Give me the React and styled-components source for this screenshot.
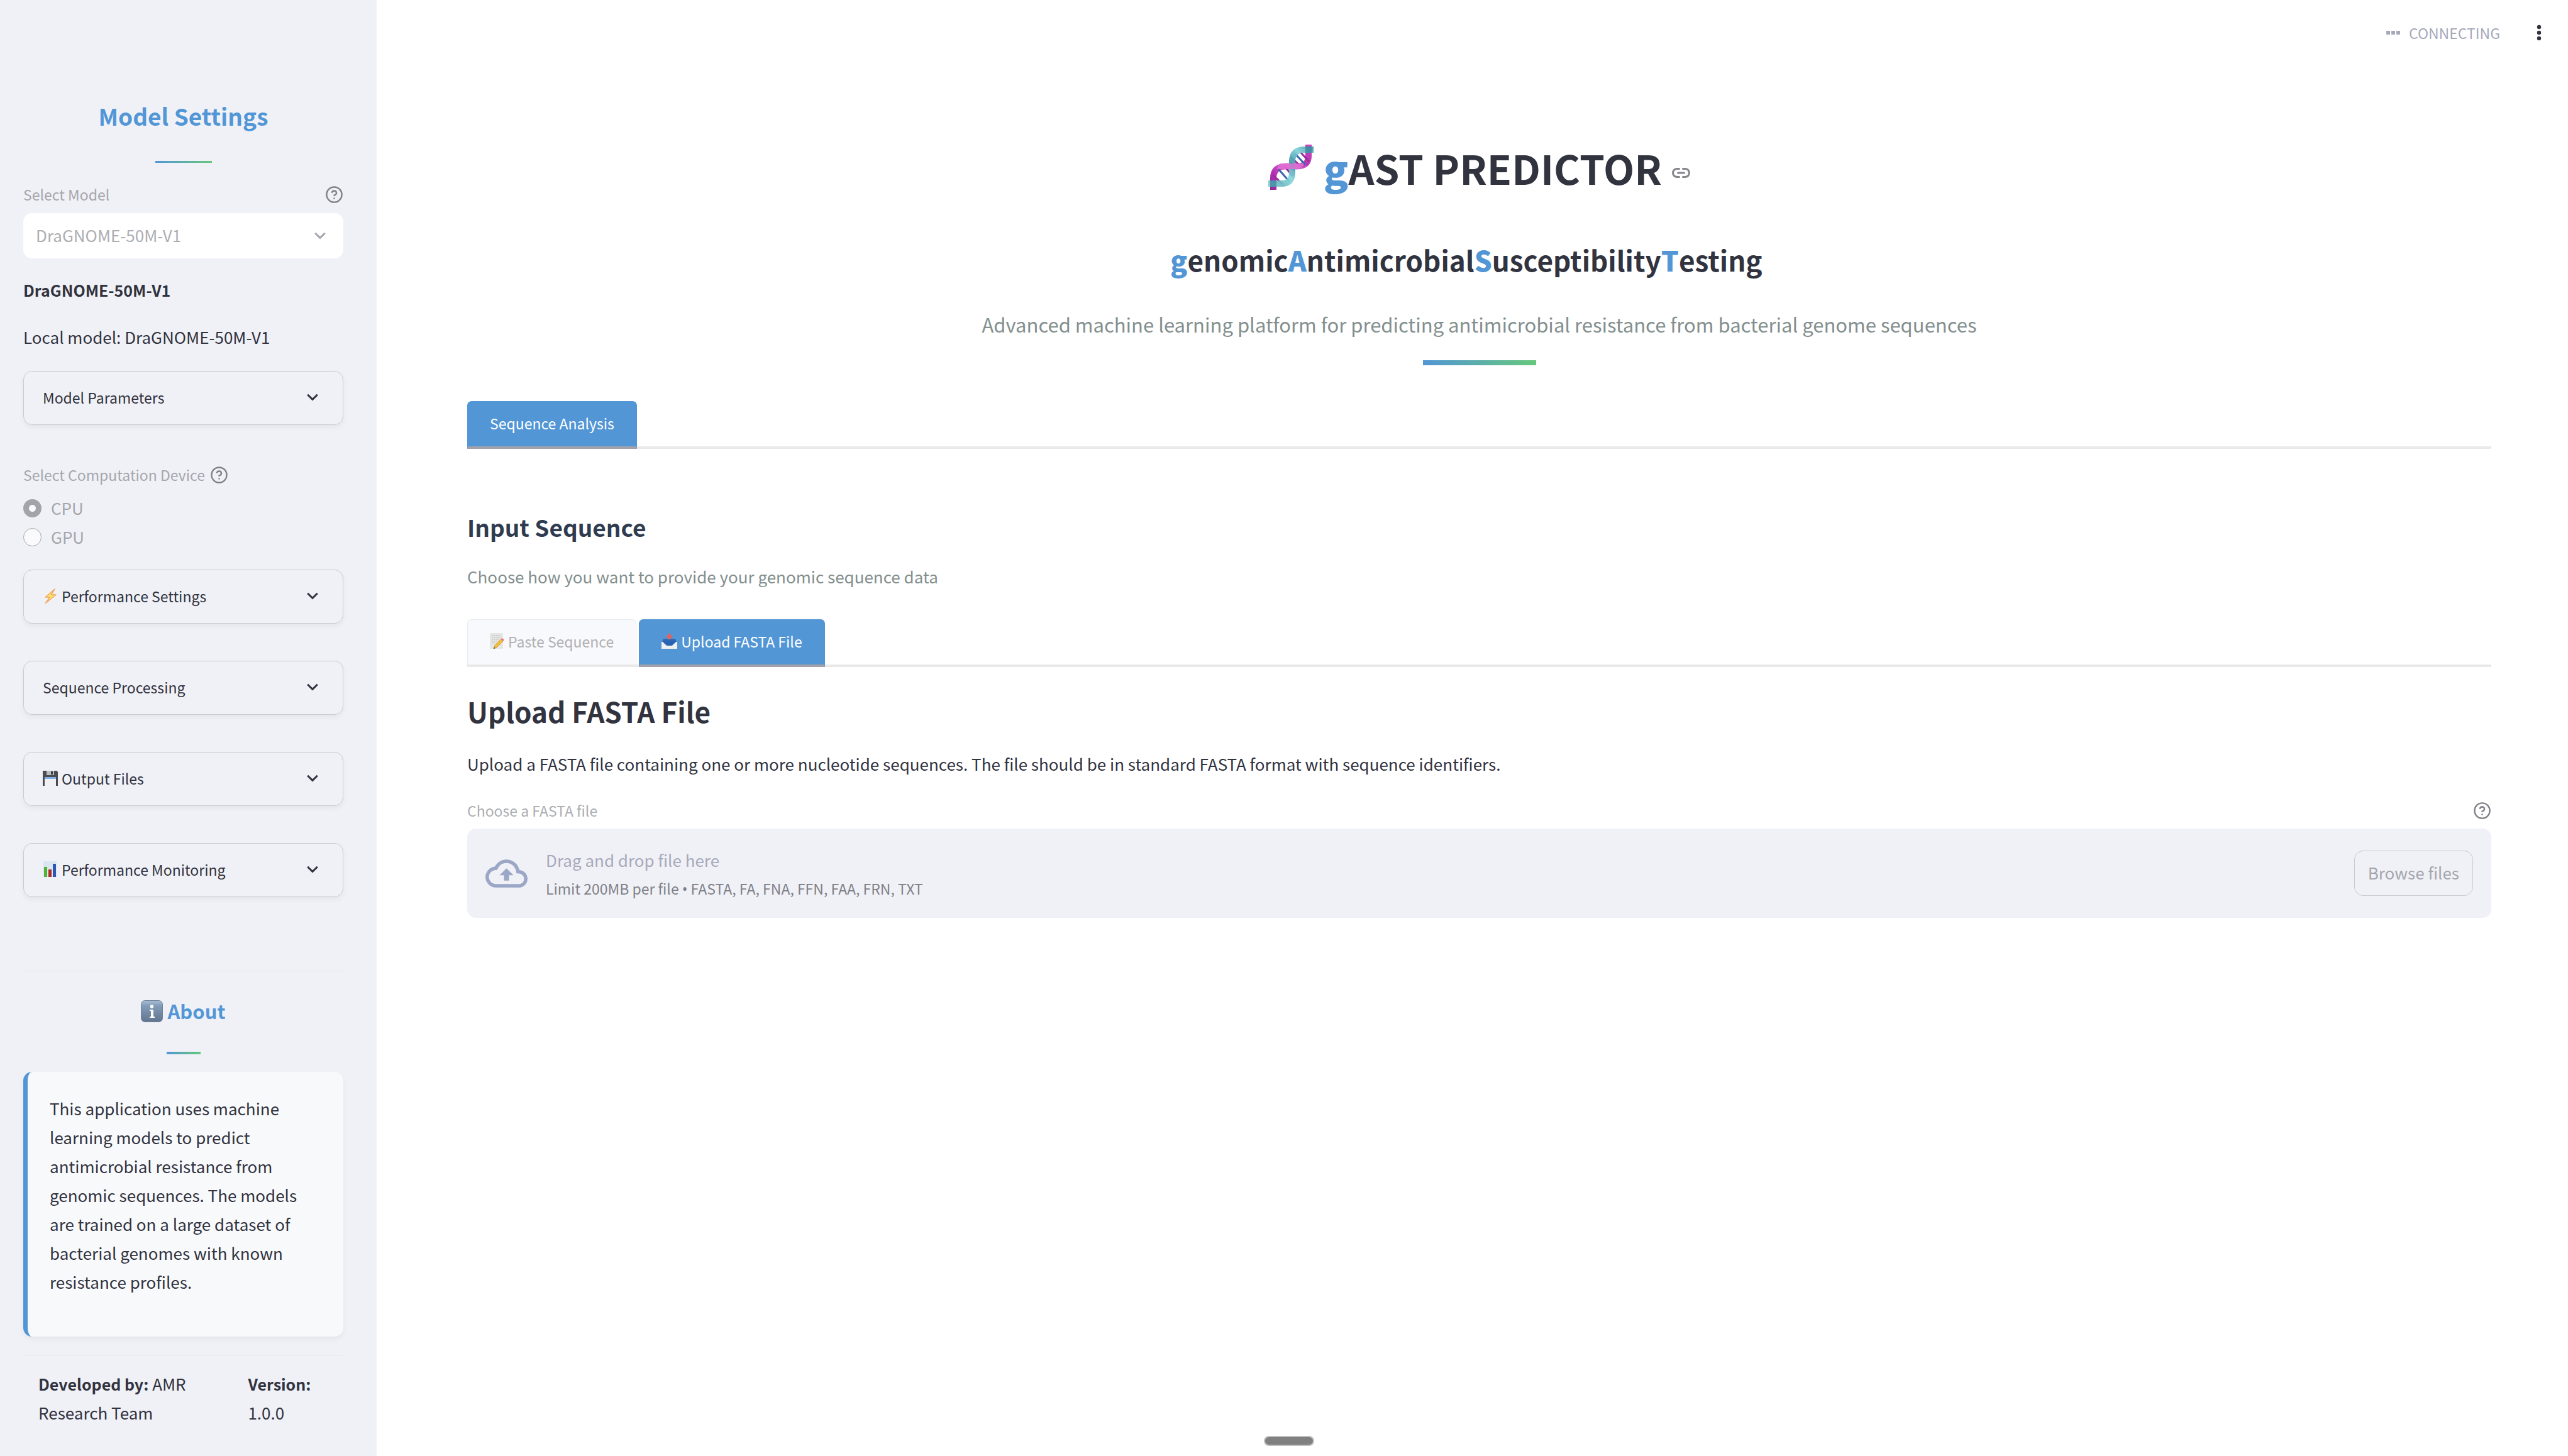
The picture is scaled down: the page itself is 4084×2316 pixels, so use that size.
import React from "react";
import styled, { createGlobalStyle } from "styled-components";

const blue = "#5296d6";
const ink = "#31333f";
const panel = "#f0f1f6";
const faded = "#a5a6ad";
const gradient = "linear-gradient(90deg, #5296d6, #66c87c)";

const GlobalStyle = createGlobalStyle`
  *, *::before, *::after { box-sizing: border-box; }
  body { margin: 0; background: #fff; }
  body, button, select, input {
    font-family: "Noto Sans CJK SC", "Noto Sans", sans-serif;
    color: ${ink};
  }
  h1, h2, h3, p { margin: 0; }
  svg { display: block; flex: none; }
`;

const Page = styled.div`
  display: flex;
  min-height: 100vh;
`;

const Sidebar = styled.aside`
  flex: none;
  width: 599px;
  padding: 161px 53px 40px 37px;
  background: ${panel};
`;

const Main = styled.main`
  flex: 1;
  min-width: 0;
`;

const Content = styled.div`
  padding: 119px 122px 80px 144px;
`;

const SidebarTitle = styled.h2`
  display: flex;
  justify-content: center;
  align-items: center;
  gap: 7px;
  margin-top: ${(p) => p.$top || 0}px;
  font-size: ${(p) => p.$size}px;
  line-height: 46px;
  font-weight: 700;
  color: ${blue};
`;

const Accent = styled.div`
  width: ${(p) => p.$width}px;
  height: ${(p) => p.$height}px;
  margin: ${(p) => p.$top}px auto 0;
  background: ${gradient};
`;

const LabelRow = styled.div`
  display: flex;
  align-items: center;
  justify-content: ${(p) => (p.$spread ? "space-between" : "flex-start")};
  gap: 8px;
  height: 36px;
  margin-top: ${(p) => p.$top}px;
  font-size: 23px;
  line-height: 36px;
  color: ${(p) => p.$color || faded};
`;

const SelectBox = styled.div`
  display: grid;
  align-items: center;
  height: 72px;
  margin-top: 12px;
  border-radius: 14px;
  background: #fff;
  > * { grid-area: 1 / 1; }
  svg { justify-self: end; margin-right: 28px; pointer-events: none; }
`;

const Select = styled.select`
  appearance: none;
  width: 100%;
  height: 72px;
  padding: 0 20px 4px;
  border: 0;
  background: transparent;
  font-size: 26px;
  color: #adaeb2;
  opacity: 1;
`;

const Text = styled.p`
  margin-top: ${(p) => p.$top || 0}px;
  font-size: ${(p) => (p.$bold ? 25 : 26)}px;
  line-height: 46px;
  color: ${(p) => p.$color || ink};
  font-weight: ${(p) => (p.$bold ? 700 : 400)};
  b { font-size: 25px; }
`;

const Radio = styled.label`
  display: flex;
  align-items: center;
  gap: 15px;
  height: 46px;
  font-size: 26px;
  line-height: 46px;
  color: ${faded};
`;

const RadioInput = styled.input`
  appearance: none;
  width: 29px;
  height: 29px;
  margin: 0;
  border: 1px solid ${faded};
  border-radius: 50%;
  background: #fafafd;
  &:checked { border: 9px solid #a3a3ab; }
`;

const RadioGroup = styled.div`
  margin: 12px 0 29px;
`;

const Expander = styled.button`
  display: flex;
  align-items: center;
  gap: 6px;
  width: 100%;
  height: 86px;
  margin-top: ${(p) => p.$top || 0}px;
  padding: 0 39px 2px 30px;
  border: 1px solid #c9cbd0;
  border-radius: 14px;
  background: transparent;
  box-shadow: 0 4px 9px rgba(0, 0, 0, 0.05);
  font-size: 23px;
  line-height: 38px;
  text-align: left;
  span { flex: 1; }
`;

const Rule = styled.hr`
  height: 1px;
  margin: ${(p) => p.$top}px 0 0;
  border: 0;
  background: #e3e4e9;
`;

const AboutCard = styled.section`
  margin-top: 28px;
  padding: 35px 36px 64px 35px;
  border-left: 7px solid ${blue};
  border-radius: 14px;
  background: #f8f9fb;
  box-shadow: 0 4px 9px rgba(0, 0, 0, 0.05);
`;

const Credits = styled.div`
  display: grid;
  grid-template-columns: 11fr 5fr;
  margin-top: 22px;
  padding-left: 24px;
`;

const Header = styled.header`
  display: flex;
  align-items: center;
  justify-content: flex-end;
  height: 104px;
  padding-right: 34px;
`;

const Status = styled.div`
  display: flex;
  align-items: center;
  gap: 14px;
  margin-right: 50px;
  font-size: 23px;
  line-height: 38px;
  color: #a6a8ba;
`;

const IconButton = styled.button`
  padding: 8px;
  border: 0;
  background: transparent;
`;

const PageTitle = styled.h1`
  display: flex;
  justify-content: center;
  align-items: center;
  padding-left: 16px;
  font-size: 64px;
  line-height: 86px;
  font-weight: 700;
  svg:first-child { margin-right: 16px; }
  a { margin: 18px 0 0 16px; }
  b { color: ${blue}; }
`;

const Expansion = styled.h2`
  margin-top: 74px;
  padding-right: 41px;
  font-size: 44px;
  line-height: 60px;
  font-weight: 700;
  text-align: center;
  b { color: ${blue}; }
`;

const Tagline = styled.p`
  margin-top: 47px;
  font-size: 31px;
  line-height: 52px;
  text-align: center;
  color: #838f8e;
`;

const Tabs = styled.div`
  display: flex;
  gap: 4px;
  height: 76px;
  margin-top: ${(p) => p.$top}px;
  box-shadow: inset 0 -4px #e9e9ea;
`;

const Tab = styled.button`
  display: flex;
  align-items: center;
  gap: 6px;
  padding: 0 35px 4px;
  border: 1px solid ${(p) => (p.$active ? blue : "#e8eaf0")};
  border-bottom: 4px solid ${(p) => (p.$active ? "#a3a2aa" : "#e9e9ea")};
  border-radius: 7px 7px 0 0;
  background: ${(p) => (p.$active ? blue : "#f8f9fc")};
  color: ${(p) => (p.$active ? "#fff" : "#b0b0b3")};
  font-size: 23px;
  line-height: 38px;
`;

const SectionTitle = styled.h2`
  margin-top: ${(p) => p.$top}px;
  font-size: ${(p) => p.$size}px;
  line-height: ${(p) => p.$line}px;
  font-weight: 700;
  color: ${(p) => p.$color || ink};
`;

const Dropzone = styled.div`
  display: flex;
  align-items: center;
  gap: 29px;
  height: 142px;
  margin-top: 11px;
  padding: 0 29px;
  border-radius: 14px;
  background: ${panel};
`;

const DropText = styled.div`
  flex: 1;
  display: flex;
  flex-direction: column;
  gap: 3px;
  font-size: 26px;
  line-height: 46px;
  color: #a6a9bb;
  small { font-size: 23px; line-height: 38px; color: #808188; }
`;

const Bullet = styled.span`
  font-family: "Noto Sans", "Open Sans", sans-serif;
`;

const Browse = styled.button`
  height: 72px;
  padding: 0 21px 3px;
  border: 1px solid #c9cad0;
  border-radius: 14px;
  background: transparent;
  font-size: 26px;
  color: ${faded};
`;

const Handle = styled.div`
  position: fixed;
  left: 50%;
  bottom: 16px;
  width: 80px;
  height: 16px;
  margin-left: -32px;
  border: 2px solid #bfbfbf;
  border-radius: 8px;
  background: #808080;
`;

const Help = () => (
  <svg width="29" height="29" viewBox="0 0 24 24" fill="none" stroke="#808188" strokeWidth="2" strokeLinecap="round" strokeLinejoin="round">
    <circle cx="12" cy="12" r="10" />
    <path d="M9.09 9a3 3 0 0 1 5.83 1c0 2-3 3-3 3" />
    <path d="M12 17h.01" />
  </svg>
);

const Chevron = ({ color = ink }) => (
  <svg width="18" height="12" viewBox="0 0 18 12" fill="none" stroke={color} strokeWidth="3">
    <path d="M1.2 1.8 9 9.4l7.800-7.600" />
  </svg>
);

const Dna = () => (
  <svg width="72" height="72" viewBox="0 0 72 72" fill="none" aria-hidden="true">
    <defs>
      <linearGradient id="teal" gradientUnits="userSpaceOnUse" x1="0" y1="72" x2="72" y2="0">
        <stop offset="0" stopColor="#8ed2d6" />
        <stop offset="0.2" stopColor="#6fb9c2" />
        <stop offset="0.38" stopColor="#86d6dc" />
        <stop offset="0.55" stopColor="#3f96a8" />
        <stop offset="0.75" stopColor="#7fd0d8" />
        <stop offset="1" stopColor="#3f8f9f" />
      </linearGradient>
      <linearGradient id="magenta" gradientUnits="userSpaceOnUse" x1="0" y1="72" x2="72" y2="0">
        <stop offset="0" stopColor="#8c2a92" />
        <stop offset="0.25" stopColor="#b62fb4" />
        <stop offset="0.5" stopColor="#e070d2" />
        <stop offset="0.72" stopColor="#b53bb0" />
        <stop offset="1" stopColor="#cf45c2" />
      </linearGradient>
    </defs>
    <path d="M64 0v18c0 11-6 16.500-18 16.500H28C14 34.500 8 42 8 53v19" stroke="url(#magenta)" strokeWidth="10" />
    <g stroke="#3a66ad" strokeWidth="3" strokeLinecap="round">
      <path d="M43 15 58 31" />
      <path d="M17 40 32 57" />
    </g>
    <g stroke="#9c2c98" strokeWidth="3" strokeLinecap="round">
      <path d="M37 21 51 34M52 13 64 26" />
      <path d="M27 36 38 49M8 49 22 62" />
    </g>
    <path d="M72 8H57C44 8 38 15 38 27v16c0 13-5 19-17 19H0" stroke="url(#teal)" strokeWidth="10" opacity="0.92" />
    <path d="M20 30h37c-2 6-7 9-13 9H15c-2 0 1-7 5-9z" fill="#e06fd2" opacity="0.85" />
    <path d="M59 3h10v10H59zM3 57h10v10H3z" fill="#2f7f98" opacity="0.6" />
  </svg>
);

const Bolt = () => (
  <svg width="24" height="26" viewBox="0 0 24 26" aria-hidden="true">
    <path d="M19 2 4 15h7L4.500 24.500 21 11h-7.500z" fill="#fde26a" stroke="#f2a75c" strokeWidth="1.500" strokeLinejoin="round" />
  </svg>
);

const Floppy = () => (
  <svg width="24" height="26" viewBox="0 0 24 26" aria-hidden="true">
    <path d="M0 1h22.500L24 3v22H0z" fill="#4b4c50" />
    <path d="M6 1h12v7H6z" fill="#b9bcc0" />
    <path d="M13 2h3v5h-3z" fill="#3b3c40" />
    <path d="M3 12h18v13H3z" fill="#f1f1f3" />
    <path d="M3 11h18v3H3z" fill="#7fb0e6" />
  </svg>
);

const Bars = () => (
  <svg width="24" height="26" viewBox="0 0 24 26" aria-hidden="true">
    <path d="M1 0h21v25H1z" fill="#dbe5ef" />
    <path d="M2 9h5v16H2z" fill="#4fb536" />
    <path d="M9 13h5v12H9z" fill="#b22a24" />
    <path d="M16 4h5v21h-5z" fill="#2a58b8" />
  </svg>
);

const Info = () => (
  <svg width="35" height="35" viewBox="0 0 35 35" aria-hidden="true">
    <defs>
      <linearGradient id="info" x1="0" y1="0" x2="0" y2="1">
        <stop offset="0" stopColor="#a8bfd6" />
        <stop offset="0.25" stopColor="#819bb8" />
        <stop offset="1" stopColor="#61758f" />
      </linearGradient>
    </defs>
    <rect x="0.500" y="0.500" width="34" height="34" rx="6" fill="url(#info)" stroke="#70839b" />
    <circle cx="17.500" cy="10" r="2.700" fill="#fff" />
    <path d="M14 15h6v11h2v2h-8v-2h2v-9h-2z" fill="#fff" />
  </svg>
);

const Memo = () => (
  <svg width="23" height="26" viewBox="0 0 23 26" aria-hidden="true">
    <path d="M0 0h21v25H0z" fill="#e6e6e5" />
    <path d="M3 4h15M3 7h15M3 10h12M3 13h9M3 16h6" stroke="#b9b9b9" strokeDasharray="2 1" />
    <path d="M17.500 9.500 21 13 11 23l-5 2 1.500-5z" fill="#f0bd3c" stroke="#b98a34" strokeWidth="0.600" />
    <path d="M17.500 9.500l1.500-1.300c2 0 3.500 1.500 3.500 3.300L21 13z" fill="#ea7d86" />
    <path d="M6 25l1-2.500L8.500 24z" fill="#333" />
  </svg>
);

const Outbox = () => (
  <svg width="25" height="26" viewBox="0 0 25 26" aria-hidden="true">
    <path d="M3 9h19l3 8H0z" fill="#2f6bb4" />
    <path d="M0 14h2l6 6h9l6-6h2v11H0z" fill="#f0f0ee" />
    <path d="M2 12h21l-5 6-2 2H9l-2-2z" fill="#2a62b4" />
    <path d="M12.500 0 18 7h-3.500v3h-4V7H7z" fill="#e8605c" />
  </svg>
);

const Link = () => (
  <svg width="29" height="16" viewBox="0 0 29 16" fill="none" stroke="#85868c" strokeWidth="3" strokeLinecap="round">
    <path d="M11.500 1.500H8a6.500 6.500 0 0 0 0 13h3.500M17.500 1.500H21a6.500 6.500 0 0 1 0 13h-3.500M9.500 8h10" />
  </svg>
);

const Cloud = () => (
  <svg width="67" height="67" viewBox="0 0 24 24" fill="#9ba7c6" aria-hidden="true">
    <path d="M19.350 10.040A7.490 7.490 0 0 0 12 4C9.110 4 6.600 5.640 5.350 8.040A5.994 5.994 0 0 0 0 14c0 3.310 2.690 6 6 6h13c2.760 0 5-2.240 5-5 0-2.640-2.050-4.780-4.650-4.960zM19 18H6c-2.210 0-4-1.790-4-4 0-2.050 1.530-3.760 3.560-3.970l1.070-.110.500-.950A5.469 5.469 0 0 1 12 6c2.620 0 4.880 1.860 5.390 4.430l.300 1.500 1.530.110A2.980 2.980 0 0 1 22 15c0 1.650-1.350 3-3 3zM8 13h2.550v3h2.900v-3H16l-4-4z" />
  </svg>
);

const Dots = () => (
  <svg width="8" height="26" viewBox="0 0 8 26" fill={ink}>
    <circle cx="4" cy="4" r="3.200" />
    <circle cx="4" cy="13" r="3.200" />
    <circle cx="4" cy="22" r="3.200" />
  </svg>
);

const Squares = () => (
  <svg width="22" height="6" viewBox="0 0 22 6" fill="#a6a8ba">
    <path d="M0 0h6v6H0zM8 0h6v6H8zM16 0h6v6h-6z" />
  </svg>
);

const expanders = [
  { title: "Performance Settings", Icon: Bolt },
  { title: "Sequence Processing" },
  { title: "Output Files", Icon: Floppy },
  { title: "Performance Monitoring", Icon: Bars },
];

function Panel({ title, Icon, top }) {
  return (
    <Expander type="button" aria-expanded="false" $top={top}>
      {Icon && <Icon />}
      <span>{title}</span>
      <Chevron />
    </Expander>
  );
}

export default function App() {
  return (
    <Page>
      <GlobalStyle />
      <Sidebar>
        <SidebarTitle $size={37}>Model Settings</SidebarTitle>
        <Accent $width={90} $height={3} $top={49} />
        <LabelRow $top={32} $spread>
          <label htmlFor="model">Select Model</label>
          <Help />
        </LabelRow>
        <SelectBox>
          <Select id="model" disabled>
            <option>DraGNOME-50M-V1</option>
          </Select>
          <Chevron color="#a5a6ad" />
        </SelectBox>
        <Text $top={27} $bold>DraGNOME-50M-V1</Text>
        <Text $top={29}>Local model: DraGNOME-50M-V1</Text>
        <Panel title="Model Parameters" top={31} />
        <LabelRow $top={61}>
          <span id="device">Select Computation Device</span>
          <Help />
        </LabelRow>
        <RadioGroup role="radiogroup" aria-labelledby="device">
          <Radio>
            <RadioInput type="radio" name="device" disabled defaultChecked />
            CPU
          </Radio>
          <Radio>
            <RadioInput type="radio" name="device" disabled />
            GPU
          </Radio>
        </RadioGroup>
        {expanders.map((e, i) => (
          <Panel key={e.title} {...e} top={i ? 59 : 0} />
        ))}
        <Rule $top={117} />
        <SidebarTitle $size={31} $top={40}>
          <Info />
          About
        </SidebarTitle>
        <Accent $width={54} $height={4} $top={42} />
        <AboutCard>
          <Text>
            This application uses machine learning models to predict antimicrobial resistance from
            genomic sequences. The models are trained on a large dataset of bacterial genomes with
            known resistance profiles.
          </Text>
        </AboutCard>
        <Rule $top={29} />
        <Credits>
          <Text><b>Developed by:</b> AMR Research Team</Text>
          <Text><b>Version:</b> 1.0.0</Text>
        </Credits>
      </Sidebar>

      <Main>
        <Header>
          <Status>
            <Squares />
            CONNECTING
          </Status>
          <IconButton type="button" aria-label="Main menu">
            <Dots />
          </IconButton>
        </Header>
        <Content>
          <PageTitle>
            <Dna />
            <span><b>g</b>AST PREDICTOR</span>
            <a href="#gast-predictor" aria-label="Link to heading"><Link /></a>
          </PageTitle>
          <Expansion>
            <b>g</b>enomic<b>A</b>ntimicrobial<b>S</b>usceptibility<b>T</b>esting
          </Expansion>
          <Tagline>
            Advanced machine learning platform for predicting antimicrobial resistance from bacterial
            genome sequences
          </Tagline>
          <Accent $width={180} $height={8} $top={31} />

          <Tabs role="tablist" $top={57}>
            <Tab type="button" role="tab" aria-selected="true" $active>Sequence Analysis</Tab>
          </Tabs>

          <SectionTitle $top={98} $size={37} $line={52} $color="#2f3c50">Input Sequence</SectionTitle>
          <Text $top={30} $color="#838f8e">Choose how you want to provide your genomic sequence data</Text>

          <Tabs role="tablist" $top={45}>
            <Tab type="button" role="tab" aria-selected="false"><Memo />Paste Sequence</Tab>
            <Tab type="button" role="tab" aria-selected="true" $active><Outbox />Upload FASTA File</Tab>
          </Tabs>

          <SectionTitle $top={40} $size={44} $line={60}>Upload FASTA File</SectionTitle>
          <Text $top={31}>
            Upload a FASTA file containing one or more nucleotide sequences. The file should be in
            standard FASTA format with sequence identifiers.
          </Text>

          <LabelRow $top={33} $spread $color="#adaeb2">
            <label htmlFor="browse">Choose a FASTA file</label>
            <Help />
          </LabelRow>
          <Dropzone>
            <Cloud />
            <DropText>
              Drag and drop file here
              <small>Limit 200MB per file <Bullet>•</Bullet> FASTA, FA, FNA, FFN, FAA, FRN, TXT</small>
            </DropText>
            <Browse id="browse" type="button" disabled>Browse files</Browse>
          </Dropzone>
        </Content>
      </Main>
      <Handle />
    </Page>
  );
}
